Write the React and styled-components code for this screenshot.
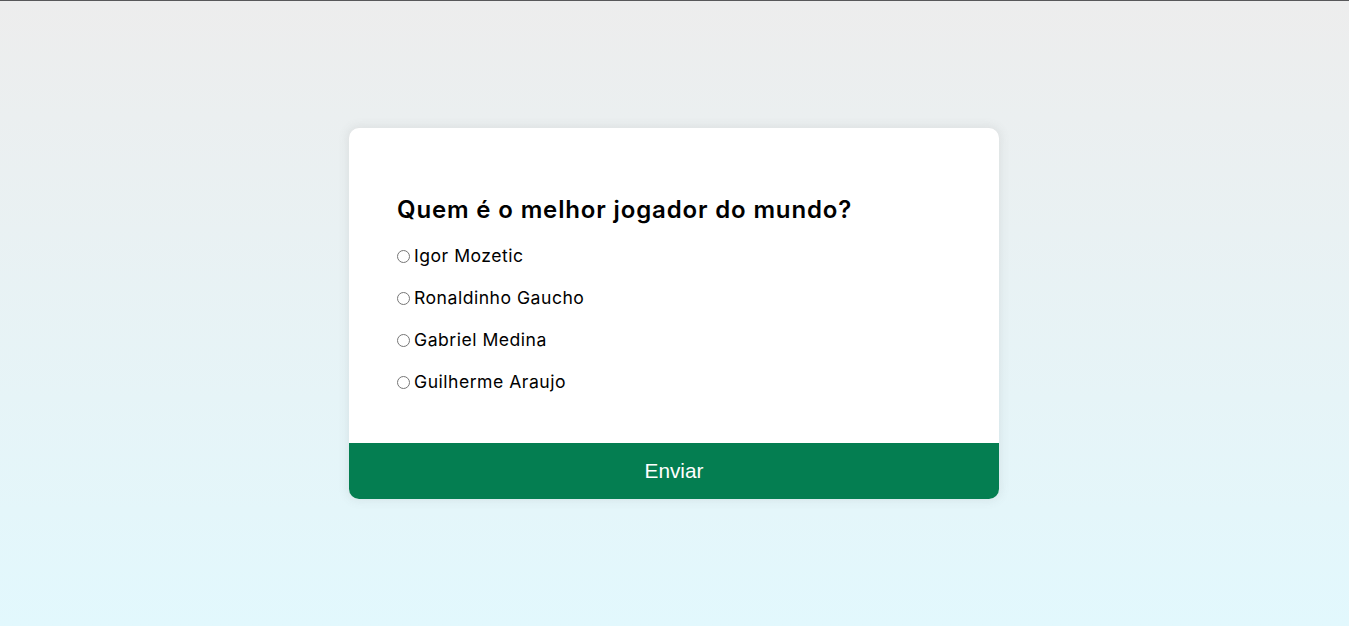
import React from "react";
import styled, { createGlobalStyle } from "styled-components";

const GlobalStyle = createGlobalStyle`
	* {
		box-sizing: border-box;
	}
	html, body {
		margin: 0;
		padding: 0;
	}
	body {
		font-family: "Inter", "Open Sans", sans-serif;
	}
`;

const options = ["Igor Mozetic", "Ronaldinho Gaucho", "Gabriel Medina", "Guilherme Araujo"];

export default function App() {
	return (
		<>
			<GlobalStyle />
			<Page>
				<QuizCard>
					<QuizHeader>
						<Question>Quem é o melhor jogador do mundo?</Question>
						<OptionList>
							{options.map((o, i) => (
								<Option key={i}>
									<input type="radio" name="answer" id={`a${i}`} />
									<label htmlFor={`a${i}`}>{o}</label>
								</Option>
							))}
						</OptionList>
					</QuizHeader>
					<SubmitButton>Enviar</SubmitButton>
				</QuizCard>
			</Page>
		</>
	);
}

const Page = styled.div`
	height: 626px;
	border-top: 1px solid #58585a;
	background: linear-gradient(180deg, #ededed 0%, #e2f8fd 100%);
	display: flex;
	align-items: center;
	justify-content: center;
`;

const QuizCard = styled.div`
	width: 650px;
	margin-right: 1px;
	background-color: #fff;
	border-radius: 10px;
	overflow: hidden;
	box-shadow: 0 0 10px 2px rgba(100, 100, 100, 0.1);
`;

const QuizHeader = styled.div`
	padding: 64px 48px 32px;
`;

const Question = styled.h2`
	margin: 0;
	font-size: 24px;
	font-weight: 600;
	line-height: 36px;
	letter-spacing: 0.85px;
	color: #000;
`;

const OptionList = styled.ul`
	list-style: none;
	padding: 0;
	margin: 15px 0 0;
`;

const Option = styled.li`
	display: flex;
	align-items: center;
	font-size: 17.6px;
	line-height: 26px;
	letter-spacing: 0.5px;
	margin: 0 0 16px;
	color: #000;
	input {
		width: 13px;
		height: 13px;
		margin: 0 4px 0 0;
	}
	label {
		cursor: pointer;
	}
`;

const SubmitButton = styled.button`
	display: block;
	width: 100%;
	height: 56px;
	border: none;
	padding: 0;
	background-color: #047e51;
	color: #fff;
	font-family: "Liberation Sans", Arial, sans-serif;
	font-size: 20.8px;
	cursor: pointer;
`;
